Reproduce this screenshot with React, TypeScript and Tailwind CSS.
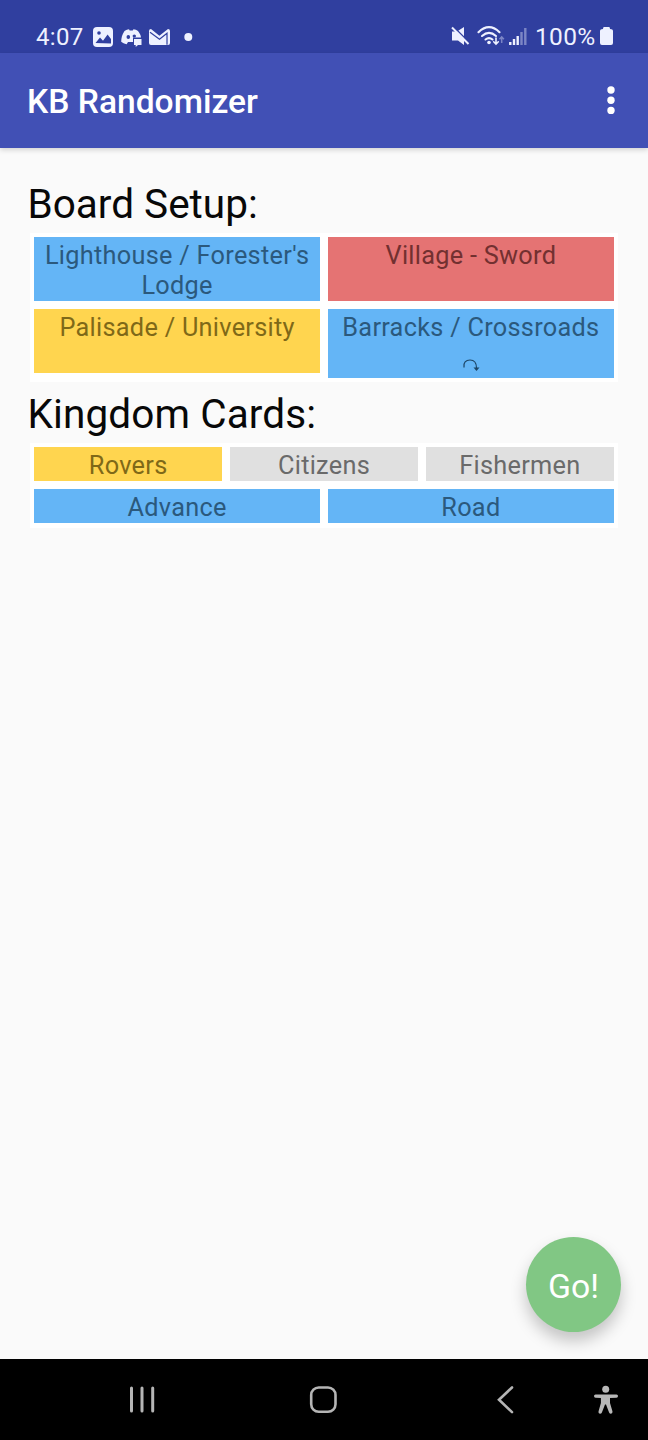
import type { ReactNode } from "react";

function Cell({ color, children }: { color: string; children: ReactNode }) {
  return (
    <div className={`flex-1 basis-0 text-center text-[25.3px] leading-[30px] tracking-[0.28px] pt-[4px] ${color}`}>
      {children}
    </div>
  );
}

const blue = "bg-[#64b5f6] text-[#2b597d]";
const yellow = "bg-[#ffd54f] text-[#7f6918]";
const red = "bg-[#e57373] text-[#723030]";
const gray = "bg-[#e0e0e0] text-[#6a6a6a]";

function StatusBar() {
  return (
    <div className="flex h-[52.5px] shrink-0 items-start bg-[#303f9f] text-[#eef1ff]">
      <div className="ml-[36px] mt-[22.5px] w-[57px] text-[24px] leading-[28px] tracking-[0.3px]">4:07</div>
      <svg className="mt-[26px] h-[22px] w-[106px] shrink-0" viewBox="0 0 106 22">
        <rect x="0" y="1" width="20" height="20" rx="4" fill="currentColor" />
        <circle cx="6" cy="7" r="1.8" fill="#303f9f" />
        <path d="M2.5 17 7 11.5l3 3.2 4.6-6.2L18 13v4.5Z" fill="#303f9f" />
        <path d="M31.5 5c2-1.4 3-1.6 4.5-1.8l.7 1.2h3l.8-1.2c1.7.2 3.2.8 4.5 1.8 1.8 2.5 2.8 4 3 6.5H40V16h-5l-1.3 2.2c-2.5-.5-4-1.2-5.5-2.4.1-4 .8-7.2 3.3-10.8Z" fill="currentColor" />
        <ellipse cx="35.3" cy="11" rx="1.8" ry="2.1" fill="#303f9f" />
        <ellipse cx="41.3" cy="10" rx="1.7" ry="1.6" fill="#303f9f" />
        <path d="M41 13h7.5v6H45l-2.3 2v-2H41Z" fill="currentColor" />
        <path d="M56 5q0-2 2-2l8.4 6.7L75 3q2 0 2 2v12q0 2-2 2H58q-2 0-2-2Z" fill="currentColor" />
        <path d="m57 6.2 9.5 7 7.5-6v11.6" fill="none" stroke="#303f9f" strokeWidth="1.2" />
        <circle cx="95.3" cy="11" r="4" fill="currentColor" />
      </svg>
      <svg className="ml-auto mt-[25px] h-[24px] w-[78px] shrink-0" viewBox="0 0 78 24">
        <path d="M2 6.5h5L14 2v18l-6-4.5H2Z" fill="currentColor" />
        <path d="m2.5.8 17 17" stroke="#303f9f" strokeWidth="1.6" />
        <path d="m2 2.5 16.5 16.5" stroke="currentColor" strokeWidth="2" />
        <g fill="none" stroke="currentColor" strokeWidth="2.1" strokeLinecap="round">
          <path d="M28.5 7.2q10.5-10 21 0" />
          <path d="M32 11q7-6.2 14 0" />
          <path d="M35.5 14.5q3.5-2.8 7 0" />
          <path d="M46 13v6m-2.3-2.2 2.3 2.4 2.3-2.4" strokeWidth="1.6" />
        </g>
        <circle cx="39" cy="17.5" r="1.8" fill="currentColor" />
        <path d="M51.7 18v-6m-2.2 2.2 2.2-2.4 2.2 2.4" fill="none" stroke="currentColor" strokeWidth="1.5" opacity=".4" />
        <path d="M60.3 17v3M64 14v6M67.7 11v9" stroke="currentColor" strokeWidth="2.4" />
        <path d="M71.5 7v13M75.3 3v17" stroke="currentColor" strokeWidth="2.4" opacity=".4" />
      </svg>
      <div className="ml-[7px] mt-[22.5px] w-[65px] text-[24.5px] leading-[28px] tracking-[0.3px]">100%</div>
      <svg className="mr-[35px] mt-[27px] h-[18px] w-[13px] shrink-0" viewBox="0 0 13 18">
        <path d="M4 0h5q1 0 1 2 3 0 3 2v12q0 2-2 2H2q-2 0-2-2V4q0-2 3-2 0-2 1-2Z" fill="currentColor" />
      </svg>
    </div>
  );
}

export default function App() {
  return (
    <div className="flex h-[1440px] w-[648px] flex-col overflow-hidden bg-[#fafafa] font-[Roboto,sans-serif]">
      <StatusBar />
      <header className="flex h-[95px] shrink-0 items-center justify-between bg-[#4150b5] pl-[27px] pr-[33px] pt-[4px] shadow-[0_2px_5px_rgba(0,0,0,0.16)]">
        <h1 className="text-[33.6px] font-medium leading-[40px] text-white">KB Randomizer</h1>
        <svg className="-mt-[2px] h-[30px] w-[8px]" viewBox="0 0 8 30" fill="white">
          <circle cx="4" cy="4" r="3.7" />
          <circle cx="4" cy="14.2" r="3.7" />
          <circle cx="4" cy="24.4" r="3.7" />
        </svg>
      </header>
      <main className="flex flex-1 flex-col pt-[33.5px]">
        <h2 className="ml-[27.5px] h-[51.5px] text-[40.5px] leading-[47px] text-[#080808]">Board Setup:</h2>
        <section className="ml-[30px] flex h-[149px] w-[588px] flex-col gap-[7.5px] bg-white px-[4px] pt-[4px]">
          <div className="flex h-[64.5px] gap-[7.5px]">
            <Cell color={blue}>Lighthouse / Forester's<br />Lodge</Cell>
            <Cell color={red}>Village - Sword</Cell>
          </div>
          <div className="flex h-[69px] gap-[7.5px]">
            <div className="flex h-[64.5px] flex-1 basis-0"><Cell color={yellow}>Palisade / University</Cell></div>
            <Cell color={blue}>
              Barracks / Crossroads
              <svg className="mx-auto mt-[15px] h-[14px] w-[18px]" viewBox="0 0 18 14" fill="none" stroke="#1d4667" strokeWidth="1.2">
                <path d="M2 9.5C1 4.5 4 2 8 2c4.5 0 6.5 3 6.5 8" />
                <path d="M11.5 9.5h6l-3 3.5Z" fill="#1d4667" stroke="none" />
              </svg>
            </Cell>
          </div>
        </section>
        <h2 className="ml-[27.5px] mt-[9px] h-[52px] text-[40.5px] leading-[47px] tracking-[0.1px] text-[#080808]">Kingdom Cards:</h2>
        <section className="ml-[30px] flex h-[85px] w-[588px] flex-col gap-[7.5px] bg-white p-[4px]">
          <div className="flex h-[34.5px] gap-[7.5px]">
            <Cell color={yellow}>Rovers</Cell>
            <Cell color={gray}>Citizens</Cell>
            <Cell color={gray}>Fishermen</Cell>
          </div>
          <div className="flex h-[34.5px] gap-[7.5px]">
            <Cell color={blue}>Advance</Cell>
            <Cell color={blue}>Road</Cell>
          </div>
        </section>
        <button className="mb-[27px] ml-auto mr-[27px] mt-auto flex size-[95px] items-center justify-center rounded-full bg-[#81c784] pt-[5px] text-[33.75px] text-white shadow-[0_9px_16px_rgba(0,0,0,0.22)]">Go!</button>
      </main>
      <nav className="flex h-[81px] shrink-0 items-center bg-black">
        <svg className="h-[81px] w-[648px]" viewBox="0 0 648 81" fill="none" stroke="#b5b5b5" strokeWidth="2.6" strokeLinecap="round">
          <path d="M131.5 29v23M142 29v23M152.7 29v23" strokeWidth="3" />
          <rect x="311.2" y="28.5" width="24.3" height="24.3" rx="7.5" />
          <path d="m512 28.5-13 12.3 13 12.3" />
          <g fill="#b8b8b8" stroke="none">
            <circle cx="605.7" cy="30.3" r="3.5" />
            <path d="M595.5 35.5h21q1.5 0 1.5 1.6t-1.5 1.6l-6.5.4v5l2.5 8.5q.2 2-1.5 2.1-1.4 0-1.9-1.3l-3.1-7.9h-1l-3.1 7.9q-.5 1.3-2 1.3-1.8-.2-1.4-2.1l2.4-8.5v-5l-5.4-.4q-1.5 0-1.5-1.6t1.5-1.6Z" />
          </g>
        </svg>
      </nav>
    </div>
  );
}
